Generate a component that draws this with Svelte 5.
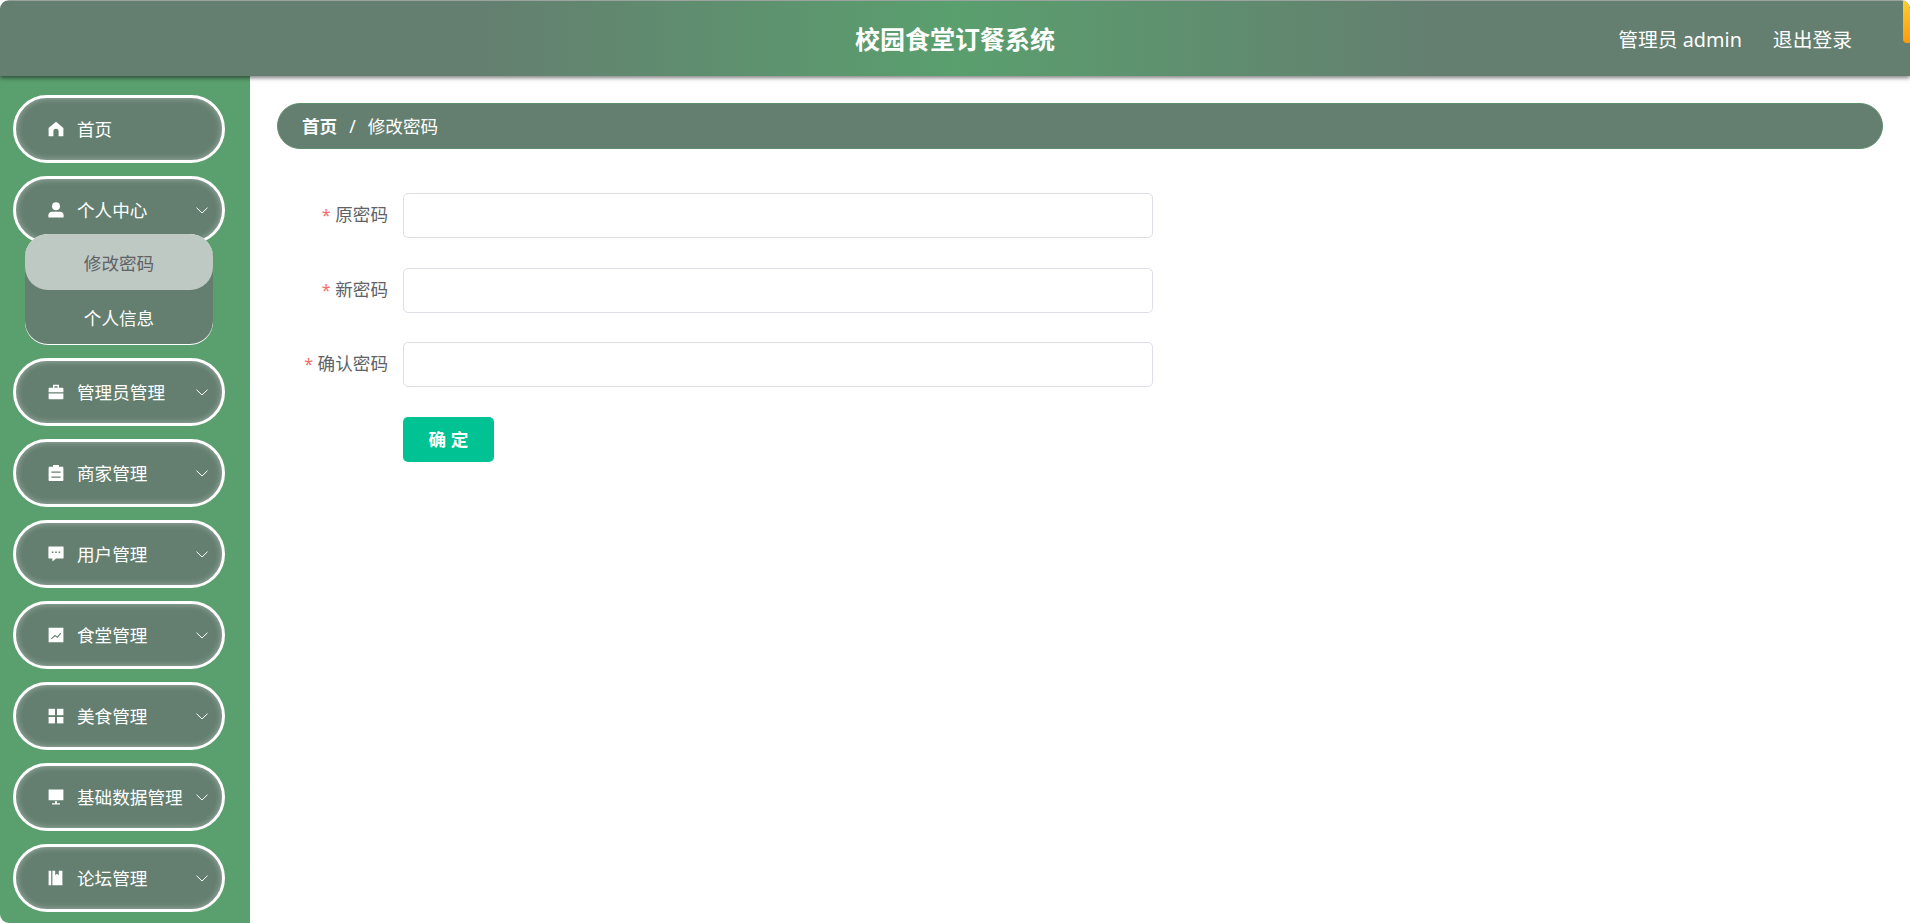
<script>
  const menus = [
    { name: '首页', icon: 'home' },
    { name: '个人中心', icon: 'user', arrow: true, children: ['修改密码', '个人信息'] },
    { name: '管理员管理', icon: 'case', arrow: true },
    { name: '商家管理', icon: 'order', arrow: true },
    { name: '用户管理', icon: 'comment', arrow: true },
    { name: '食堂管理', icon: 'data', arrow: true },
    { name: '美食管理', icon: 'grid', arrow: true },
    { name: '基础数据管理', icon: 'screen', arrow: true },
    { name: '论坛管理', icon: 'book', arrow: true }
  ];
  const fields = ['原密码', '新密码', '确认密码'];
</script>

<div class="page">
  <span class="corner-tab"></span>
  <header class="topbar">
    <div></div>
    <div class="title">校园食堂订餐系统</div>
    <div class="user">
      <span>管理员 admin</span>
      <span>退出登录</span>
    </div>
  </header>

  <div class="body">
    <aside class="sidebar">
      {#each menus as m}
        <div class="menu-item" class:open={m.children}>
          <svg class="icon" viewBox="0 0 16 16" fill="#fff">
            {#if m.icon === 'home'}
              <path d="M8 .8 15.4 7v8.2H10.6V10.4a2.600 2.600 0 0 0-5.200 0v4.800H.6V7z" />
            {:else if m.icon === 'user'}
              <circle cx="8" cy="4.200" r="4" />
              <path d="M.4 15.400v-2.200c0-2 1.600-3.400 3.600-3.400h8c2 0 3.600 1.400 3.600 3.400v2.200z" />
            {:else if m.icon === 'case'}
              <path d="M5 .8h6v3h3.600c.4 0 .8.4.8.8v3.600H.6V4.600c0-.4.4-.8.8-.8H5zm1.400 1.400v1.600h3.200V2.200z" />
              <path d="M.6 9.600h14.800v4.800c0 .4-.4.8-.8.8H1.400c-.4 0-.8-.4-.8-.8z" />
            {:else if m.icon === 'order'}
              <path fill-rule="evenodd" d="M5 0h6v1.800h3.400c.6 0 1 .4 1 1V15c0 .6-.4 1-1 1H1.600c-.6 0-1-.4-1-1V2.800c0-.6.4-1 1-1H5zM3.400 6.400v1.400h9.200V6.400zm0 5v1.400h9.200v-1.400z" />
            {:else if m.icon === 'comment'}
              <path fill-rule="evenodd" d="M1 .6h14c.4 0 .6.2.6.6v10.600c0 .4-.2.6-.6.6H8l-3.600 3.200v-3.200H1c-.4 0-.6-.2-.6-.6V1.200c0-.4.2-.6.6-.6zM3.800 5.400v1.600h1.600V5.400zm3.400 0v1.600h1.600V5.400zm3.400 0v1.600h1.600V5.400z" />
            {:else if m.icon === 'data'}
              <path fill-rule="evenodd" d="M.6.800h14.800v14.400H.6zm2.400 10.600.7.800 3.300-3 2.400 1.800 3.800-4.600-.8-.7-3.200 3.800-2.300-1.800z" />
            {:else if m.icon === 'grid'}
              <rect x=".6" y=".8" width="6.400" height="6.400" />
              <rect x="9" y=".8" width="6.400" height="6.400" />
              <rect x=".6" y="9" width="6.400" height="6.400" />
              <rect x="9" y="9" width="6.400" height="6.400" />
            {:else if m.icon === 'screen'}
              <path d="M.6.400h14.800v10.800H.6zM7 12.200h2v2h3v1.200H4v-1.200h3z" />
            {:else}
              <path d="M.6.800h2.600v14.400H.6zM4.400.800h2.800v4.400l1.800-1.400 1.800 1.400V.800h3.600v14.400h-10z" />
            {/if}
          </svg>
          <span class="menu-name">{m.name}</span>
          {#if m.arrow}
            <svg class="arrow" viewBox="0 0 12 7" fill="none" stroke="#fff" stroke-width="1">
              <path d="M.5.700 6 6 11.500.700" />
            </svg>
          {/if}
        </div>
        {#if m.children}
          <div class="submenu">
            {#each m.children as c, i}
              <div class="sub-item" class:active={i === 0}>{c}</div>
            {/each}
          </div>
        {/if}
      {/each}
    </aside>

    <main class="content">
      <div class="crumb">
        <b>首页</b>
        <span class="sep">/</span>
        <span>修改密码</span>
      </div>

      <form class="form">
        {#each fields as f}
          <div class="row">
            <label for={f}><i>*</i> {f}</label>
            <input id={f} type="password" />
          </div>
        {/each}
        <div class="row">
          <span></span>
          <button type="button">确 定</button>
        </div>
      </form>
    </main>
  </div>
</div>

<style>
  :global(body) {
    background: #fff;
  }
  .page {
    position: relative;
    width: 1910px;
    height: 923px;
    overflow: hidden;
    border-radius: 9px;
    font-family: "Noto Sans", "Noto Sans CJK SC", sans-serif;
  }
  .corner-tab {
    position: absolute;
    top: 0;
    right: 0;
    width: 7px;
    height: 43px;
    z-index: 5;
    border-bottom-left-radius: 4px;
    background: linear-gradient(#ffcf2e, #ff9a0a);
  }
  .topbar {
    position: relative;
    z-index: 3;
    display: grid;
    grid-template-columns: 1fr auto 1fr;
    align-items: center;
    box-sizing: border-box;
    height: 76px;
    color: #fff;
    border-top: 1px solid #9aa39e;
    background: linear-gradient(90deg, #647f70 0%, #647f70 25%, #5a9f6e 50%, #647f70 75%, #647f70 100%);
    box-shadow: 0 2px 4px rgba(0, 0, 0, 0.5);
  }
  .title {
    padding-top: 2px;
    font-size: 25px;
    font-weight: 700;
    line-height: 1;
  }
  .user {
    display: flex;
    justify-content: flex-end;
    gap: 31px;
    padding-right: 58px;
    font-size: 19.8px;
  }
  .body {
    display: flex;
    height: 847px;
  }
  .sidebar {
    box-sizing: border-box;
    width: 250px;
    padding: 19px 25px 0 13px;
    background: #5a9f6e;
  }
  .menu-item {
    display: flex;
    align-items: center;
    box-sizing: border-box;
    width: 212px;
    height: 68px;
    margin-bottom: 13px;
    padding: 0 14px 2px 32px;
    color: #fff;
    font-size: 17.6px;
    background: #647f70;
    border: 3px solid #fff;
    border-radius: 34px;
    box-shadow: inset 0 0 6px rgba(255, 255, 255, 0.4);
  }
  .menu-item.open {
    margin-bottom: 0;
  }
  .icon {
    flex: none;
    width: 16px;
    height: 16px;
    margin: 2px 13px 0 0;
  }
  .menu-name {
    white-space: nowrap;
  }
  .arrow {
    flex: none;
    width: 12px;
    height: 7px;
    margin: 2px 0 0 auto;
  }
  .submenu {
    position: relative;
    box-sizing: border-box;
    width: 188px;
    height: 111px;
    margin: -10px 0 13px 12px;
    overflow: hidden;
    background: #647f70;
    border-radius: 23px;
    box-shadow: inset 0 1px 0 #fff, inset 0 -1px 0 #fff;
  }
  .sub-item {
    display: flex;
    align-items: center;
    justify-content: center;
    height: 55px;
    color: #fff;
    font-size: 17.6px;
  }
  .sub-item.active {
    height: 56px;
    color: #606266;
    background: #bfc9c4;
    border-radius: 23px;
  }
  .content {
    flex: 1;
    padding: 27px 27px 0;
    background: #fff;
  }
  .crumb {
    display: flex;
    align-items: center;
    box-sizing: border-box;
    height: 46px;
    padding: 0 0 1px 24px;
    color: #fff;
    font-size: 17.6px;
    background: #647f70;
    border: 1px solid #5f8f6e;
    border-radius: 23px;
  }
  .crumb b {
    font-weight: 700;
  }
  .sep {
    margin: 0 12px;
    font-weight: 400;
  }
  .form {
    margin-top: 44px;
  }
  .row {
    display: grid;
    grid-template-columns: 111px 750px;
    column-gap: 15px;
    align-items: center;
    height: 45px;
    margin-bottom: 29.5px;
  }
  label {
    padding-bottom: 4px;
    color: #606266;
    font-size: 17.6px;
    text-align: right;
    white-space: nowrap;
  }
  label i {
    color: #f56c6c;
    font-style: normal;
    font-size: 16px;
  }
  input {
    box-sizing: border-box;
    width: 750px;
    height: 45px;
    background: #fff;
    border: 1px solid #dcdfe6;
    border-radius: 5px;
    outline: none;
  }
  button {
    width: 91px;
    height: 45px;
    padding: 0 0 2px;
    color: #fff;
    font-family: inherit;
    font-size: 17.6px;
    font-weight: 700;
    background: #00c292;
    border: 0;
    border-radius: 5px;
  }
</style>
